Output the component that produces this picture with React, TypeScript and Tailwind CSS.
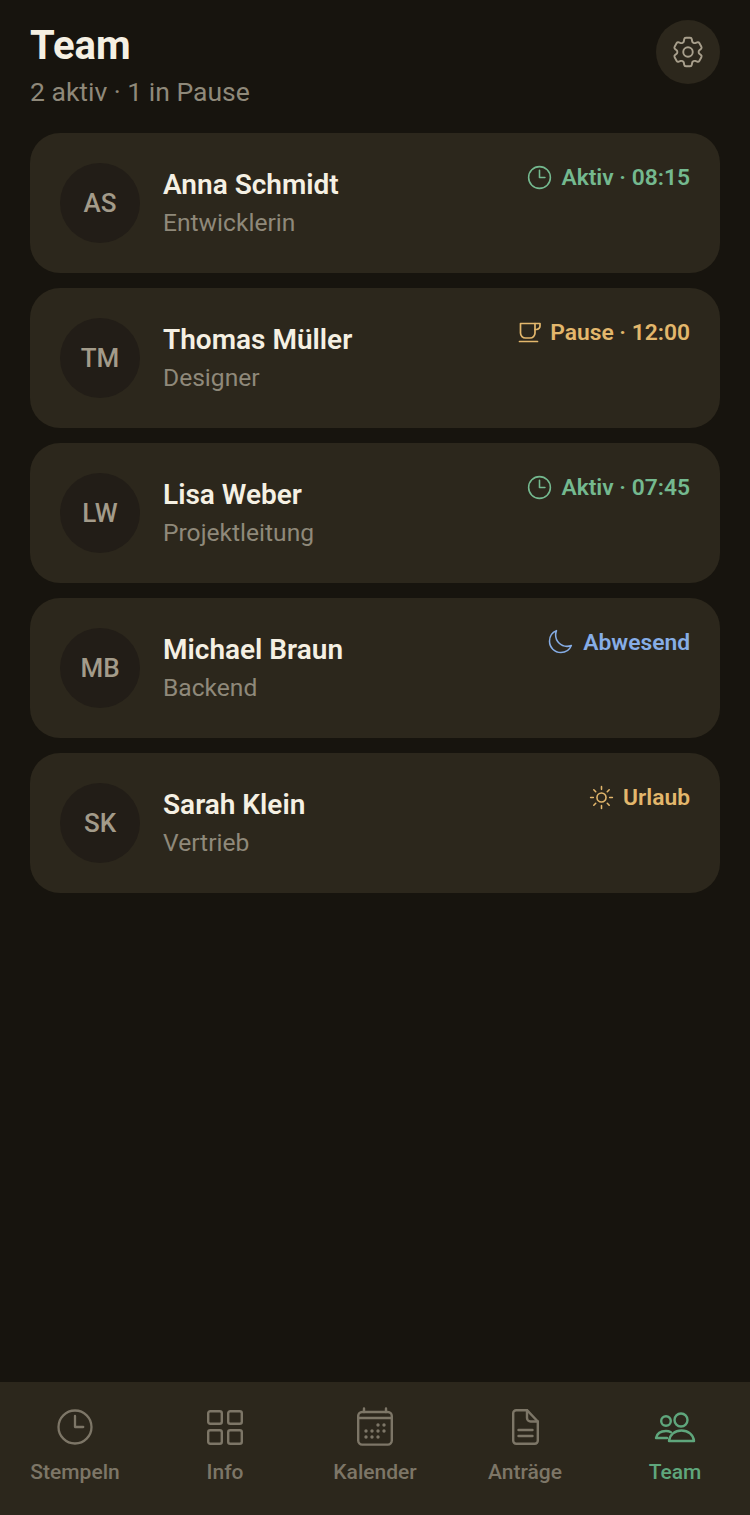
import React from 'react';
import { HiOutlineClock, HiOutlineCog6Tooth, HiOutlineMoon, HiOutlineSun } from 'react-icons/hi2';

type Member = {
  initials: string;
  name: string;
  role: string;
  status: string;
  kind: 'active' | 'pause' | 'away' | 'vacation';
};

const members: Member[] = [
  { initials: 'AS', name: 'Anna Schmidt', role: 'Entwicklerin', status: 'Aktiv · 08:15', kind: 'active' },
  { initials: 'TM', name: 'Thomas Müller', role: 'Designer', status: 'Pause · 12:00', kind: 'pause' },
  { initials: 'LW', name: 'Lisa Weber', role: 'Projektleitung', status: 'Aktiv · 07:45', kind: 'active' },
  { initials: 'MB', name: 'Michael Braun', role: 'Backend', status: 'Abwesend', kind: 'away' },
  { initials: 'SK', name: 'Sarah Klein', role: 'Vertrieb', status: 'Urlaub', kind: 'vacation' },
];

const CupIcon = () => (
  <svg className="w-[24px] h-[24px] -mr-[1px]" viewBox="0 0 24 24" fill="none" stroke="currentColor" strokeWidth="1.7" strokeLinecap="round" strokeLinejoin="round">
    <path d="M2.500 3.500H17V13a5 5 0 0 1-5 5H7.500a5 5 0 0 1-5-5V3.500z" />
    <path d="M17 3.500h5v2.500a3.500 3.500 0 0 1-3.500 3.500H17" />
    <path d="M1.500 21.500h18" />
  </svg>
);

const StatusIcon = ({ kind }: { kind: Member['kind'] }) => {
  switch (kind) {
    case 'active':
      return <HiOutlineClock className="w-[29px] h-[29px] -mr-[2px]" strokeWidth={1.3} />;
    case 'pause':
      return <CupIcon />;
    case 'away':
      return <HiOutlineMoon className="w-[28px] h-[28px]" strokeWidth={1.3} />;
    default:
      return <HiOutlineSun className="w-[29px] h-[29px] -mr-[2px]" strokeWidth={1.3} />;
  }
};

const statusColor = {
  active: 'text-[#74b98f]',
  pause: 'text-[#e3b76c]',
  away: 'text-[#86ade6]',
  vacation: 'text-[#e3b76c]',
};

const GridIcon = () => (
  <svg className="w-[40px] h-[40px]" viewBox="0 0 40 40" fill="none" stroke="currentColor" strokeWidth="2.400">
    <rect x="3.200" y="4.200" width="13.600" height="12.600" rx="2" />
    <rect x="23.200" y="4.200" width="13.600" height="12.600" rx="2" />
    <rect x="3.200" y="23.200" width="13.600" height="13.600" rx="2" />
    <rect x="23.200" y="23.200" width="13.600" height="13.600" rx="2" />
  </svg>
);

const CalendarIcon = () => (
  <svg className="w-[40px] h-[40px]" viewBox="0 0 40 40" fill="none" stroke="currentColor" strokeWidth="2.400" strokeLinecap="round">
    <rect x="3.200" y="5" width="33.600" height="32.600" rx="4" />
    <path d="M3.200 11h33.600M9 1.500V5M31 1.500V5" />
    <g fill="currentColor" stroke="none">
      <circle cx="23" cy="18" r="1.700" />
      <circle cx="29" cy="18" r="1.700" />
      <circle cx="11" cy="24" r="1.700" />
      <circle cx="17" cy="24" r="1.700" />
      <circle cx="23" cy="24" r="1.700" />
      <circle cx="29" cy="24" r="1.700" />
      <circle cx="11" cy="30" r="1.700" />
      <circle cx="17" cy="30" r="1.700" />
      <circle cx="23" cy="30" r="1.700" />
    </g>
  </svg>
);

const DocIcon = () => (
  <svg className="w-[40px] h-[40px]" viewBox="0 0 40 40" fill="none" stroke="currentColor" strokeWidth="2.400" strokeLinecap="round" strokeLinejoin="round">
    <path d="M11.200 3.200H22L32.800 14.500V33.800a3 3 0 0 1-3 3H11.200a3 3 0 0 1-3-3V6.200a3 3 0 0 1 3-3z" />
    <path d="M22 3.200V11a3.500 3.500 0 0 0 3.500 3.500h7.300" />
    <path d="M13.500 23h14M13.500 29h14" />
  </svg>
);

const TeamIcon = () => (
  <svg className="w-[42px] h-[38px]" viewBox="0 0 42 38" fill="none" stroke="currentColor" strokeWidth="2.400" strokeLinecap="round" strokeLinejoin="round">
    <circle cx="12" cy="13" r="4.800" />
    <circle cx="27" cy="12" r="6.500" />
    <path d="M13 30H2c1-4.500 5-7 10-7 2 0 3.500.4 5 1.200" />
    <path d="M15 33c.5-6.500 6-10.500 12.500-10.500S39.500 26.500 40 33H15z" />
  </svg>
);

const navItems = [
  { label: 'Stempeln', icon: <HiOutlineClock className="w-[44px] h-[44px]" strokeWidth={1.25} /> },
  { label: 'Info', icon: <GridIcon /> },
  { label: 'Kalender', icon: <CalendarIcon /> },
  { label: 'Anträge', icon: <DocIcon /> },
  { label: 'Team', icon: <TeamIcon />, active: true },
];

export default function App() {
  return (
    <div className="w-[750px] h-[1515px] bg-[#17140e] flex flex-col font-['Roboto',sans-serif]">
      <div className="flex-1 px-[30px]">
        {/* Header */}
        <div className="flex items-start justify-between pt-[20px] h-[133px]">
          <div>
            <h1 className="text-[40px] leading-[52px] font-bold text-[#f5f0e3]">Team</h1>
            <p className="text-[26.500px] leading-[40px] text-[#8f897a]">2 aktiv · 1 in Pause</p>
          </div>
          <button className="w-[64px] h-[64px] rounded-full bg-[#2c271c] flex items-center justify-center text-[#a89f8c]">
            <HiOutlineCog6Tooth className="w-[38px] h-[38px]" strokeWidth={1.2} />
          </button>
        </div>

        {/* Member cards */}
        <div className="flex flex-col gap-[15px]">
          {members.map((m) => (
            <div key={m.name} className="h-[140px] rounded-[30px] bg-[#2c271c] px-[30px] flex items-start">
              <div className="mt-[30px] w-[80px] h-[80px] rounded-full bg-[#221d17] flex items-center justify-center text-[26px] font-medium text-[#a39b8a]">
                {m.initials}
              </div>
              <div className="ml-[23px] mt-[33px] flex-1">
                <div className="text-[28px] leading-[38px] font-semibold text-[#f5f0e3]">{m.name}</div>
                <div className="text-[24.600px] leading-[38px] text-[#8f897a]">{m.role}</div>
              </div>
              <div className={`mt-[28px] flex items-center gap-[9px] h-[32px] text-[22.800px] leading-[32px] font-semibold ${statusColor[m.kind]}`}>
                <StatusIcon kind={m.kind} />
                <span className="mt-[2px]">{m.status}</span>
              </div>
            </div>
          ))}
        </div>
      </div>

      {/* Bottom nav */}
      <div className="h-[133px] bg-[#2c271c] grid grid-cols-5">
        {navItems.map((item) => (
          <div
            key={item.label}
            className={`flex flex-col items-center ${item.active ? 'text-[#5fa67c]' : 'text-[#7d7667]'}`}
          >
            <div className="h-[44px] mt-[23px] flex items-center justify-center">{item.icon}</div>
            <span className="mt-[9px] text-[21px] leading-[28px] font-medium">{item.label}</span>
          </div>
        ))}
      </div>
    </div>
  );
}
